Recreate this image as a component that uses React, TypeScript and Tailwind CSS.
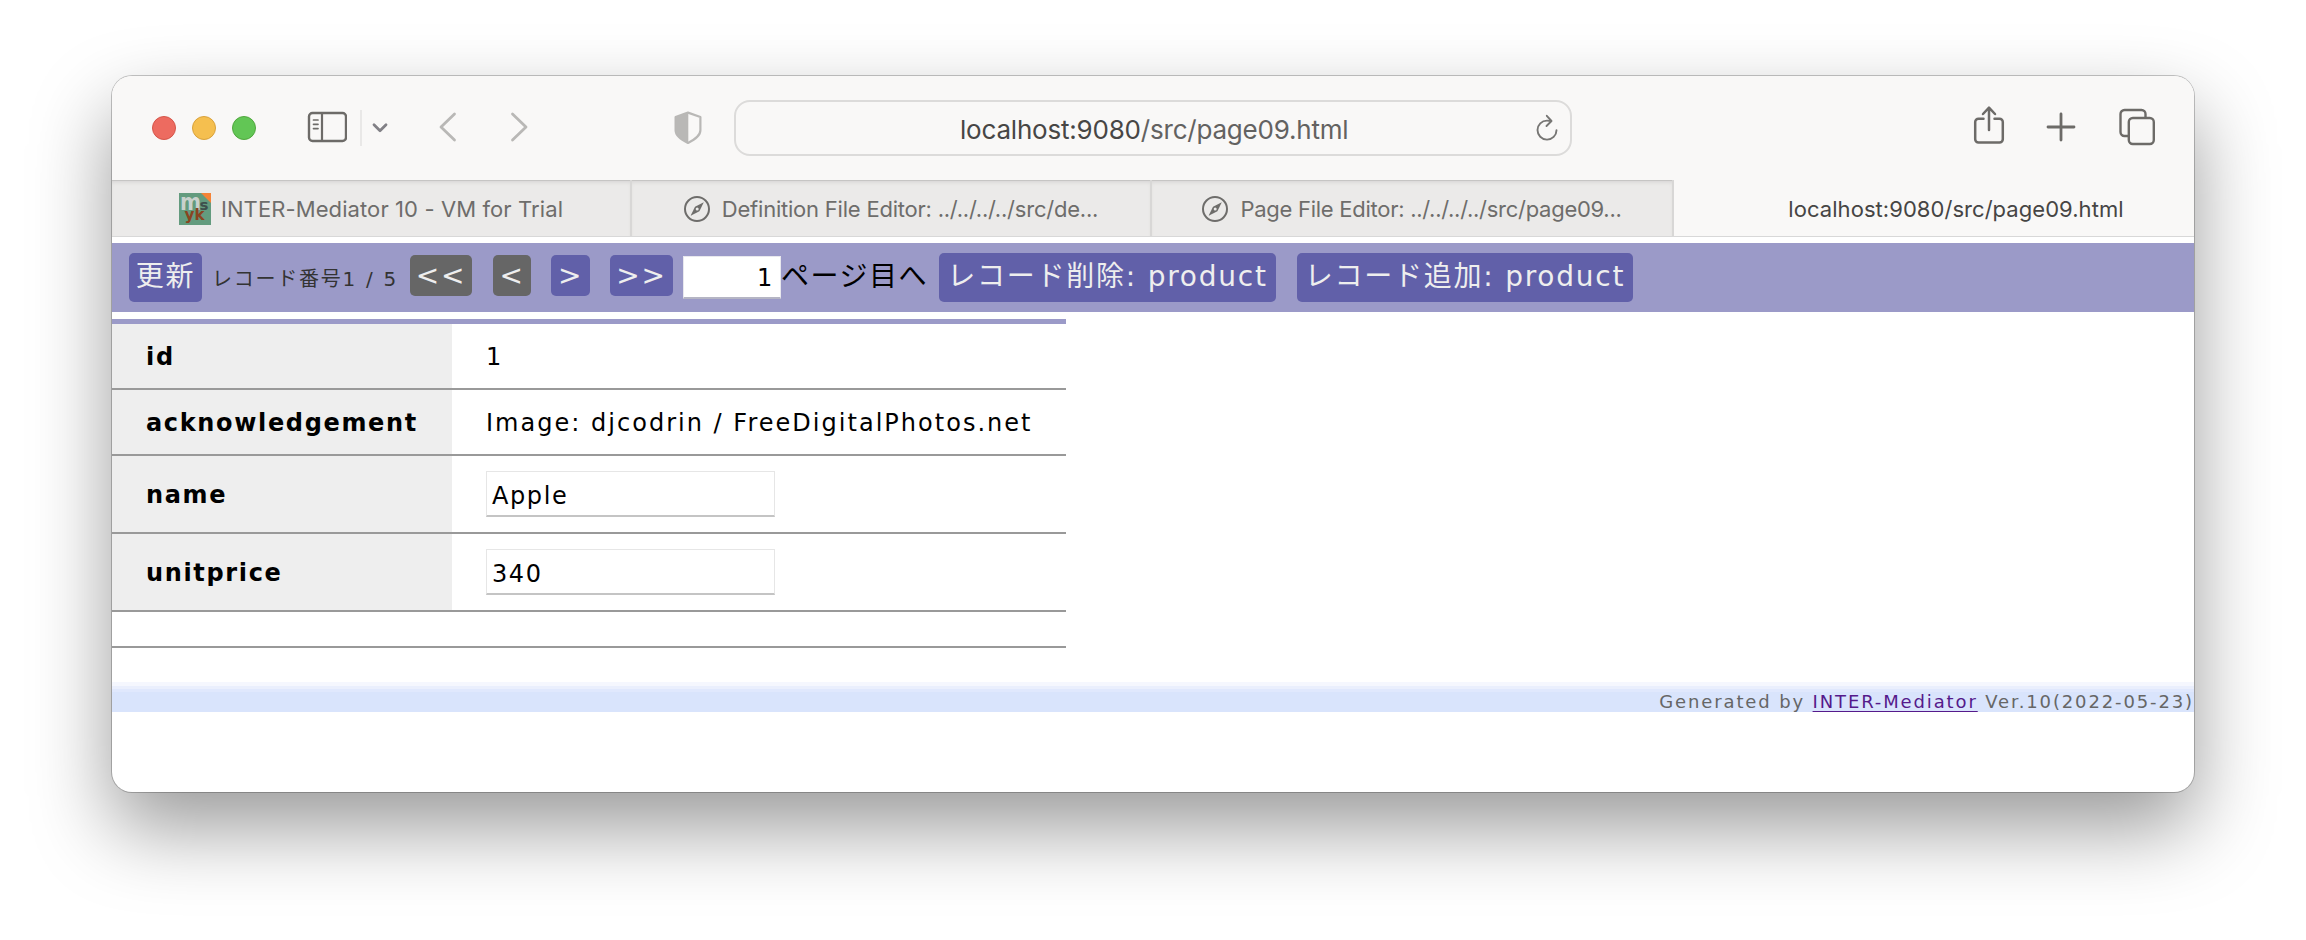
import type { ReactNode } from "react";

const BODY_FONT = "font-['DejaVu_Sans','Noto_Sans_CJK_JP',sans-serif]";
const UI_FONT = "font-[Inter,sans-serif]";

function TrafficLights() {
  return (
    <div className="flex gap-4">
      <span className="size-6 rounded-full border border-[#d5564a] bg-[#ed6b60]" />
      <span className="size-6 rounded-full border border-[#d9a23c] bg-[#f5bf4f]" />
      <span className="size-6 rounded-full border border-[#51a73e] bg-[#62c655]" />
    </div>
  );
}

function SidebarIcon() {
  return (
    <svg width="40" height="32" viewBox="0 0 40 32" fill="none" stroke="#6d6b68" className="ml-[51px] -mt-0.5">
      <rect x="2" y="2" width="37" height="28" rx="3.5" strokeWidth="2.4" />
      <path d="M15 2v28" strokeWidth="2.2" />
      <path d="M6.5 9h4.5M6.5 13.3h4.5M6.5 17.6h4.5" strokeWidth="1.7" strokeLinecap="round" />
    </svg>
  );
}

function ShieldIcon() {
  return (
    <svg width="30" height="34" viewBox="0 0 30 34" className="ml-[144px]">
      <path
        d="M15 1.6 27.4 6v13.2c0 5.2-4.6 8.6-12.4 12.8C7.2 27.8 2.6 24.4 2.6 19.2V6Z"
        fill="none"
        stroke="#b9b8b6"
        strokeWidth="2.2"
        strokeLinejoin="round"
      />
      <path d="M15.3 1.6 2.6 6v13.2c0 5.2 4.6 8.6 12.7 12.8Z" fill="#b9b8b6" />
    </svg>
  );
}

function ReloadIcon() {
  return (
    <svg width="24" height="28" viewBox="0 0 24 28" fill="none" stroke="#777674" strokeWidth="1.9" strokeLinecap="round" strokeLinejoin="round">
      <path d="M21.5 16.200A9.500 9.500 0 1 1 12 6.600c1.600 0 3 .2 4 .4" />
      <path d="m11.8 1.8 4.700 5.200-5 5" />
    </svg>
  );
}

function ShareIcon() {
  return (
    <svg width="32" height="40" viewBox="0 0 32 40" fill="none" stroke="#6d6b68" strokeWidth="2.5" strokeLinecap="round" strokeLinejoin="round">
      <path d="M10.500 13.700H5.500a3.300 3.300 0 0 0-3.300 3.300v17.200a3.300 3.300 0 0 0 3.300 3.300h21a3.300 3.300 0 0 0 3.300-3.300V17a3.300 3.300 0 0 0-3.300-3.300h-5" />
      <path d="M16 25V3M10 9l6-6.300L22 9" />
    </svg>
  );
}

function CompassIcon() {
  return (
    <svg width="26" height="26" viewBox="0 0 26 26" fill="none">
      <circle cx="13" cy="13" r="12" stroke="#6e6d6b" strokeWidth="2" />
      <path d="M19.800 6.300 15.400 15.200 6.600 19.800 11 10.800Z" fill="#6e6d6b" />
      <circle cx="13.200" cy="13" r="1.500" fill="#ebeae9" />
    </svg>
  );
}

function Favicon() {
  return (
    <svg width="32" height="32" viewBox="0 0 32 32" fontFamily="DejaVu Sans, sans-serif" fontWeight="700">
      <path d="M0 0h32v32H0Z" fill="#639b7e" />
      <path d="M22 0h10v10Z" fill="#f58337" />
      <text x="1" y="17" fontSize="23" textLength="21" lengthAdjust="spacingAndGlyphs" fill="#c9d1cc">m</text>
      <text x="20.5" y="17" fontSize="14" textLength="9" lengthAdjust="spacingAndGlyphs" fill="#3d4f4c">s</text>
      <text x="5.5" y="26.5" fontSize="16" textLength="20" lengthAdjust="spacingAndGlyphs" fill="#8a4420">yk</text>
    </svg>
  );
}

function Toolbar() {
  return (
    <header className="flex h-[104px] items-center bg-[#f9f8f7] pl-10">
      <TrafficLights />
      <SidebarIcon />
      <span className="ml-[13px] h-9 w-0.5 bg-[#e9e8e7]" />
      <svg width="18" height="12" viewBox="0 0 18 12" fill="none" stroke="#828186" strokeWidth="2.8" strokeLinecap="round" strokeLinejoin="round" className="ml-[9px]">
        <path d="m3 2.800 6 6 6-6" />
      </svg>
      <svg width="20" height="32" viewBox="0 0 20 32" fill="none" stroke="#b9b8b6" strokeWidth="2.8" strokeLinecap="round" strokeLinejoin="round" className="ml-[49px] -mt-0.5">
        <path d="M16.500 3 3 16l13.500 13" />
      </svg>
      <svg width="20" height="32" viewBox="0 0 20 32" fill="none" stroke="#b9b8b6" strokeWidth="2.8" strokeLinecap="round" strokeLinejoin="round" className="ml-[51px] -mt-0.5">
        <path d="M3.500 3 17 16 3.500 29" />
      </svg>
      <ShieldIcon />
      <div className="ml-[31px] flex h-14 w-[838px] items-center rounded-2xl border-2 border-[#dcdbda]">
        <div className="w-[799px] whitespace-nowrap pl-[224px] pt-[3px] text-[26px] leading-[30px] tracking-[-0.2px] text-[#636261]">
          <span className="text-[#474645]">localhost:9080</span>/src/page09.html
        </div>
        <ReloadIcon />
      </div>
      <div className="ml-[401px] -mt-1.5">
        <ShareIcon />
      </div>
      <svg width="30" height="30" viewBox="0 0 30 30" stroke="#6d6b68" strokeWidth="2.8" strokeLinecap="round" className="ml-[41px] -mt-[3px]">
        <path d="M15 2v26M2 15h26" />
      </svg>
      <svg width="38" height="38" viewBox="0 0 38 38" fill="none" stroke="#6d6b68" strokeWidth="2.4" className="ml-[42px] -mt-0.5">
        <path d="M10 28H6.500A4 4 0 0 1 2.500 24V6a4 4 0 0 1 4-4h17a4 4 0 0 1 4 4v4" />
        <rect x="10.800" y="10" width="25" height="26" rx="4" />
      </svg>
    </header>
  );
}

function Tab({ width, icon, children }: { width: string; icon: ReactNode; children: ReactNode }) {
  return (
    <div className={`flex h-full items-center justify-center whitespace-nowrap border-r-2 border-[#d8d7d6] bg-[#ebeae9] pt-px text-[22px] leading-7 text-[#6e6d6b] shadow-[inset_0_1px_0_#c6c5c4,inset_0_4px_4px_-2px_#d3d2d1] ${width}`}>
      {icon}
      {children}
    </div>
  );
}

function TabBar() {
  return (
    <div className="flex h-[57px] border-b border-[#d8d8d8] bg-[#f9f8f7]">
      <Tab width="w-[520px]" icon={<Favicon />}>
        <span className="ml-2.5 pt-px tracking-[0.1px]">INTER-Mediator 10 - VM for Trial</span>
      </Tab>
      <Tab width="w-[520px]" icon={<CompassIcon />}>
        <span className="ml-3 pt-px tracking-[-0.22px]">Definition File Editor: ../../../../src/de...</span>
      </Tab>
      <Tab width="w-[522px]" icon={<CompassIcon />}>
        <span className="ml-3 pt-px tracking-[-0.27px]">Page File Editor: ../../../../src/page09...</span>
      </Tab>
      <div className="flex flex-1 items-center justify-center whitespace-nowrap pl-11 pt-0.5 text-[22px] leading-7 text-[#464544]">
        <span className="tracking-[0.05px]">localhost:9080/src/page09.html</span>
      </div>
    </div>
  );
}

function TextButton({ className, children }: { className: string; children: ReactNode }) {
  return (
    <button className={`h-[49px] shrink-0 whitespace-nowrap rounded-[5px] bg-[#6160a9] text-center text-[28px] leading-[47px] text-[#eee] pb-0.5 ${className}`}>
      {children}
    </button>
  );
}

function ArrowButton({ className, children }: { className: string; children: ReactNode }) {
  return (
    <button className={`mt-0.5 h-[41px] shrink-0 rounded-[5px] text-center text-[28px] leading-[42px] text-[#eee] ${className}`}>
      {children}
    </button>
  );
}

function Navigation() {
  return (
    <nav className="mt-[5px] flex h-[69px] items-start whitespace-nowrap bg-[#9b9ac8] pl-[17px] pt-2.5 tracking-[1.75px]">
      <TextButton className="w-[73px]">更新</TextButton>
      <span className="ml-2.5 w-[198px] text-[20px] leading-[52px] text-[#333]">
        レコード番号<span className="tracking-[2.2px]">1 / 5</span>
      </span>
      <ArrowButton className="w-[62px] bg-[#666]">&lt;&lt;</ArrowButton>
      <ArrowButton className="ml-[21px] w-[38px] bg-[#666]">&lt;</ArrowButton>
      <ArrowButton className="ml-5 w-[39px] bg-[#6160a9]">&gt;</ArrowButton>
      <ArrowButton className="ml-5 w-[63px] bg-[#6160a9]">&gt;&gt;</ArrowButton>
      <div className="ml-2.5 mt-[3px] h-[43px] w-[98px] border border-b-2 border-[#e8e8ee] border-b-[#b5b5c4] bg-white pr-1.5 text-right text-[24px] leading-[43px] text-black">
        1
      </div>
      <span className="w-[158px] text-[28px] leading-[47px] tracking-[1.5px] text-black">ページ目へ</span>
      <TextButton className="w-[337px]">レコード削除: product</TextButton>
      <TextButton className="ml-[21px] w-[336px]">レコード追加: product</TextButton>
    </nav>
  );
}

function Row({ label, height, children }: { label: string; height: string; children: ReactNode }) {
  return (
    <div className={`flex border-b-2 border-[#999] ${height}`}>
      <div className="flex w-[340px] items-center bg-[#eee] pl-[34px] pt-0.5 font-bold tracking-[1.65px]">{label}</div>
      <div className="flex items-center pl-[34px]">{children}</div>
    </div>
  );
}

function Field({ value }: { value: string }) {
  return (
    <div className="h-[46px] w-[289px] border border-b-2 border-[#e6e6e6] border-b-[#c4c4c4] pl-[5px] pt-0.5 leading-[44px] tracking-[1.6px]">
      {value}
    </div>
  );
}

function RecordTable() {
  return (
    <section className="mt-[7px] w-[954px] border-t-[5px] border-[#9b9ac8] text-[24px] leading-8 text-black">
      <Row label="id" height="h-[66px]">
        <span className="pt-0.5">1</span>
      </Row>
      <Row label="acknowledgement" height="h-[66px]">
        <span className="whitespace-nowrap pt-0.5 tracking-[2.02px]">Image: djcodrin / FreeDigitalPhotos.net</span>
      </Row>
      <Row label="name" height="h-[78px]">
        <Field value="Apple" />
      </Row>
      <Row label="unitprice" height="h-[78px]">
        <Field value="340" />
      </Row>
      <div className="h-9 border-b-2 border-[#999]" />
    </section>
  );
}

export default function App() {
  return (
    <div className="h-[940px] overflow-hidden bg-white px-28 pt-[76px]">
      <div className="h-[716px] overflow-hidden rounded-[20px] bg-white shadow-[0_0_0_1px_rgba(0,0,0,0.22),0_36px_80px_rgba(0,0,0,0.4)]">
        <div className={UI_FONT}>
          <Toolbar />
          <TabBar />
        </div>
        <main className={`pt-px ${BODY_FONT}`}>
          <Navigation />
          <RecordTable />
          <footer className="mt-[34px] h-[30px] whitespace-nowrap bg-[linear-gradient(#f5f7fe_0_4px,#eaeffd_4px_7px,#e0e8fd_7px_10px,#d9e4fc_10px)] text-right text-[18px] leading-[40px] tracking-[1.87px] text-[#666]">
            Generated by <a className="text-[#551a8b] underline decoration-1 underline-offset-[3px]">INTER-Mediator</a> Ver.10(2022-05-23)
          </footer>
        </main>
      </div>
    </div>
  );
}
